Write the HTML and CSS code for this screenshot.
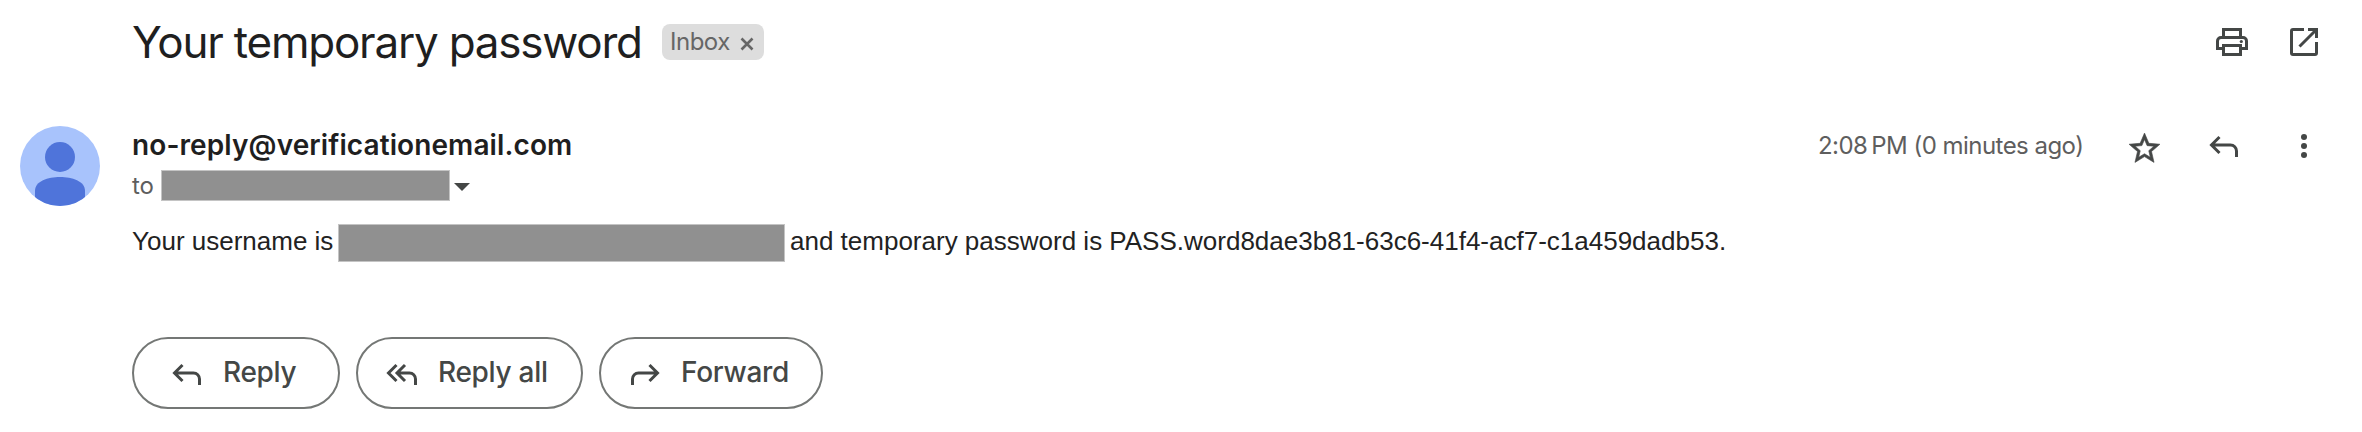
FILE: index.html
```html
<!DOCTYPE html>
<html lang="en">
<head>
<meta charset="utf-8">
<title>Your temporary password</title>
<link rel="stylesheet" href="styles.css">
</head>
<body>
<main class="mail">
  <header class="subject-row">
    <h1 class="subject">Your temporary password</h1>
    <div class="label"><span class="label-text">Inbox</span>
      <svg class="label-close" viewBox="0 0 14 14"><path d="M1.5 1.5l11 11M12.5 1.5l-11 11"/></svg>
    </div>
    <div class="subject-actions">
      <svg class="icon" viewBox="0 0 40 40"><path d="M11.5 15V7.500h17V15M11.500 26.500H5.500V19a3.500 3.500 0 0 1 3.500-3.500h22a3.500 3.500 0 0 1 3.500 3.500v7.500h-6M11.500 23.500h17v9h-17z"/><circle class="solid" cx="29.300" cy="19.500" r="1.600"/></svg>
      <svg class="icon" viewBox="0 0 40 40"><path d="M20 7.500H9A1.500 1.500 0 0 0 7.500 9v22A1.500 1.500 0 0 0 9 32.500h22a1.500 1.500 0 0 0 1.500-1.500V20M24 7.500h8.500V16M32.500 7.500L15.500 24.500"/></svg>
    </div>
  </header>
  <section class="sender-row">
    <svg class="avatar" viewBox="0 0 80 80"><defs><clipPath id="disc"><circle cx="40" cy="40" r="40"/></clipPath></defs><g clip-path="url(#disc)"><rect class="avatar-bg" width="80" height="80"/><circle class="avatar-fg" cx="40" cy="31" r="15"/><path class="avatar-fg" d="M15 80V65C15 55 28 51 40 51S65 55 65 65V80Z"/></g></svg>
    <div class="sender">
      <div class="address">no-reply@verificationemail.com</div>
      <div class="recipient"><span class="to">to</span><span class="mask mask-to"></span><svg class="caret" viewBox="0 0 16 8"><path d="M0 0h16L8 8z"/></svg></div>
    </div>
    <div class="meta">
      <span class="time">2:08&#8239;PM (0 minutes ago)</span>
      <svg class="star" viewBox="0 0 24 24"><path d="M22 9.240l-7.190-.620L12 2 9.190 8.630 2 9.240l5.460 4.730L5.820 21 12 17.270 18.180 21l-1.630-7.030L22 9.240zM12 15.400l-3.760 2.270 1-4.280-3.320-2.880 4.380-.380L12 6.100l1.710 4.040 4.380.380-3.320 2.880 1 4.280L12 15.400z"/></svg>
      <svg class="icon" viewBox="0 0 40 40"><path d="M15.500 11l-8 8 8 8M8 19h18.500a6 6 0 0 1 6 6v6"/></svg>
      <svg class="icon more" viewBox="0 0 40 40"><g class="solid"><circle cx="20" cy="11" r="3"/><circle cx="20" cy="20" r="3"/><circle cx="20" cy="29" r="3"/></g></svg>
    </div>
  </section>
  <p class="message"><span class="msg-start">Your username is</span><span class="mask mask-user"></span><span class="msg-end">and temporary password is PASS.word8dae3b81-63c6-41f4-acf7-c1a459dadb53.</span></p>
  <nav class="actions">
    <button class="action reply"><svg class="icon" viewBox="0 0 40 40"><path d="M15.500 11l-8 8 8 8M8 19h18.500a6 6 0 0 1 6 6v6"/></svg><span>Reply</span></button>
    <button class="action reply-all"><svg class="icon" viewBox="0 0 40 40"><path d="M15.500 11l-8 8 8 8M24 11l-8 8 8 8M16.500 19h12a6 6 0 0 1 6 6v6"/></svg><span>Reply all</span></button>
    <button class="action forward"><svg class="icon" viewBox="0 0 40 40"><path d="M24.500 11l8 8-8 8M32 19H13.500a6 6 0 0 0-6 6v6"/></svg><span>Forward</span></button>
  </nav>
</main>
</body>
</html>
```
FILE: styles.css
```css
* { box-sizing: border-box; }
body { margin: 0; background: #fff; color: #1f1f1f; font-family: Inter, Roboto, sans-serif; }
.mail { width: 2362px; height: 432px; overflow: hidden; white-space: nowrap; }
.subject-row { display: flex; align-items: center; height: 84px; padding: 0 38px 0 132px; }
.subject { margin: 0; width: 530px; font-size: 44px; font-weight: 400; line-height: 54px; letter-spacing: -1.220px; }
.label { display: flex; align-items: center; justify-content: space-between; width: 102px; height: 36px; padding: 0 10px 0 8px; border-radius: 8px; background: #ddd; color: #666; font-size: 24px; letter-spacing: -0.5px; }
.label-text { padding-bottom: 1px; }
.label-close { width: 14px; height: 14px; margin-top: 3px; fill: none; stroke: #666; stroke-width: 2.600; }
.subject-actions { display: flex; gap: 32px; margin-left: auto; }
.icon { display: block; flex: none; width: 40px; height: 40px; fill: none; stroke: #444746; stroke-width: 3; }
.solid { fill: #444746; stroke: none; }
.sender-row { display: flex; height: 122px; padding: 42px 38px 0 20px; }
.avatar { flex: none; width: 80px; height: 80px; }
.avatar-bg { fill: #a8c3fc; }
.avatar-fg { fill: #4f74da; }
.sender { padding-left: 32px; }
.address { height: 44px; font-size: 28px; font-weight: 600; line-height: 38px; letter-spacing: 0.100px; }
.recipient { display: flex; align-items: center; height: 31px; color: #5e5e5e; font-size: 24px; letter-spacing: -0.2px; }
.to { width: 29px; }
.mask { flex: none; background: #909090; border: 1px solid #c4c4c4; }
.mask-to { width: 289px; height: 31px; }
.caret { width: 16px; height: 8px; margin: 2px 0 0 4px; fill: #444746; }
.meta { display: flex; height: 40px; margin-left: auto; }
.time { width: 306px; color: #5e5e5e; font-size: 24px; line-height: 40px; letter-spacing: -0.530px; }
.star { width: 37px; height: 37px; margin: 4px 41.500px 0 1.500px; fill: #444746; stroke: #444746; stroke-width: 0.400; }
.more { margin-left: 40px; }
.message { display: flex; align-items: center; height: 38px; margin: 18px 0 0; padding-left: 132px; color: #222; font-family: "Liberation Sans", Arial, sans-serif; font-size: 26px; }
.msg-start { width: 206px; padding-bottom: 3px; }
.mask-user { width: 447px; height: 38px; }
.msg-end { margin-left: 5px; padding-bottom: 3px; }
.actions { display: flex; gap: 16px; margin-top: 75px; padding-left: 132px; }
.action { display: flex; align-items: center; height: 72px; padding: 0; border: 2px solid #747775; border-radius: 36px; background: #fff; color: #444746; font: 500 28px/34px Inter, Roboto, sans-serif; letter-spacing: -0.3px; }
.action .icon { margin-top: 2px; }
.action span { padding-bottom: 2px; }
.reply { width: 208px; padding-left: 33px; }
.reply-all { width: 227px; padding-left: 23px; }
.forward { width: 224px; padding-left: 24px; }
.reply span, .forward span { margin-left: 16px; }
.reply-all span { margin-left: 17px; }
```
